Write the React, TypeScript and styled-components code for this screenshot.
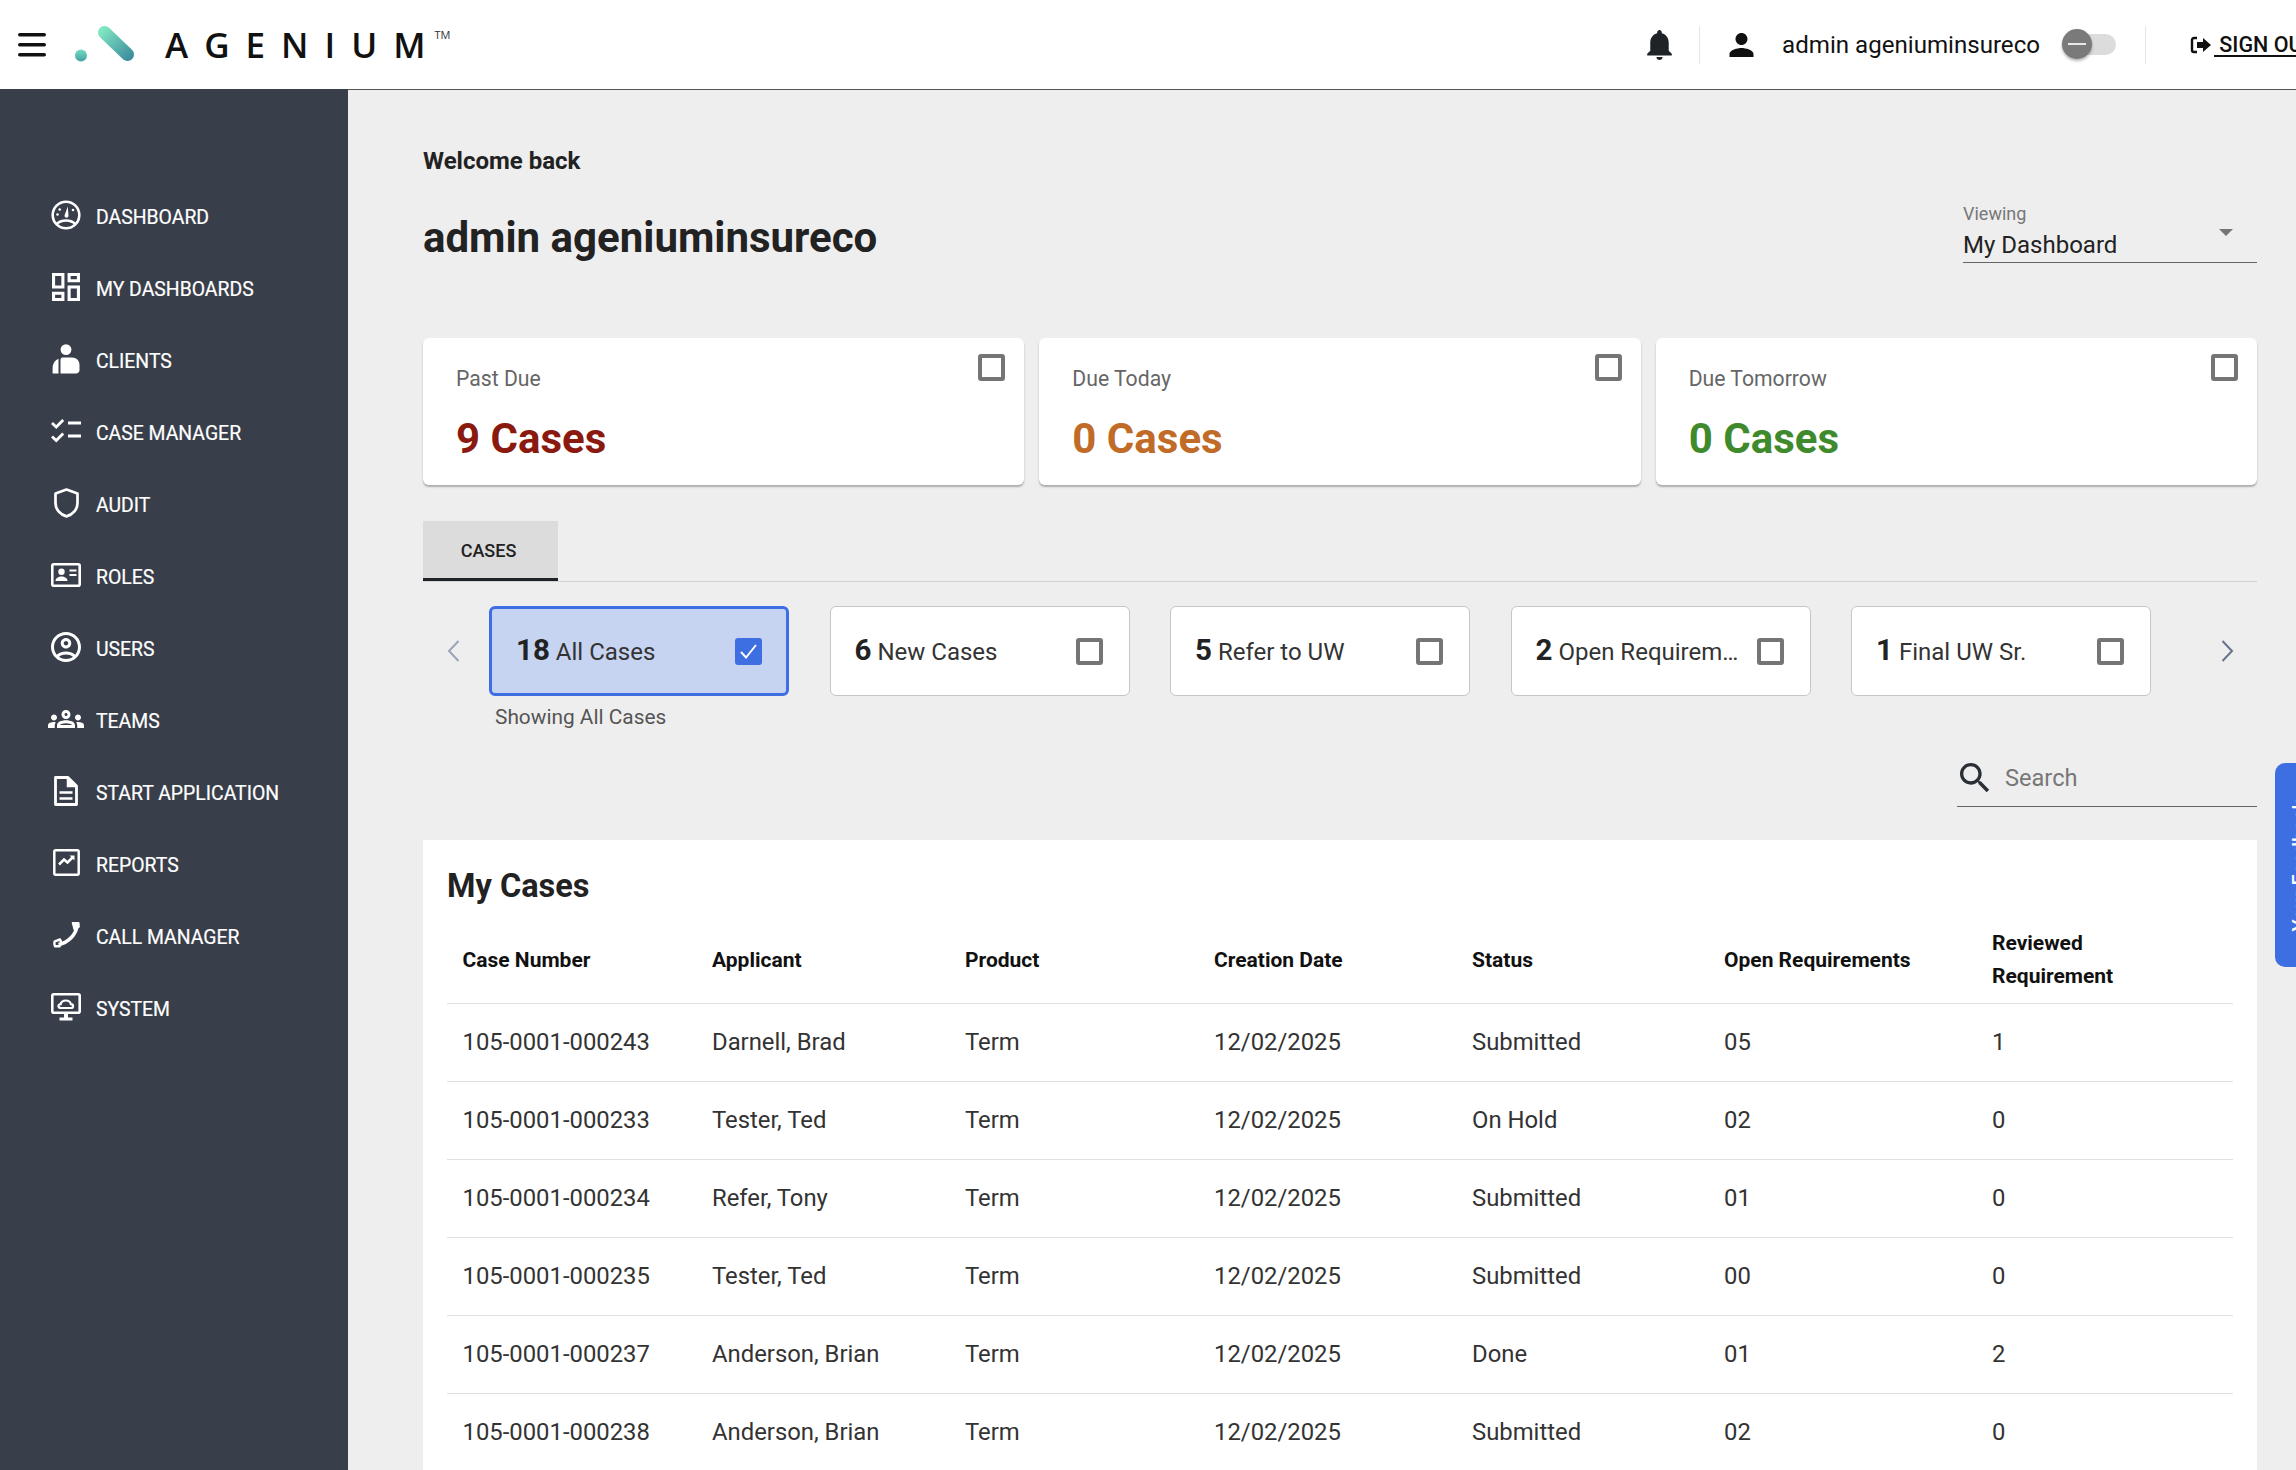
import React from "react";
import styled, { createGlobalStyle } from "styled-components";

const Global = createGlobalStyle`
  html, body { margin: 0; padding: 0; height: 100%; overflow: hidden; }
  body { font-family: Roboto, "Liberation Sans", sans-serif; background: #eeeeee; color: #222; }
  #root { height: 100%; }
  * { box-sizing: border-box; }
`;

const Page = styled.div`
  width: 2296px; height: 1470px; display: flex; flex-direction: column; overflow: hidden; position: relative;
`;
const Header = styled.header`
  height: 90px; flex: none; background: #fff; display: flex; align-items: center; padding-left: 18px;
  border-bottom: 1px solid #555;
`;
const LogoMark = styled.svg`margin-left: 29px; display: block; margin-top: -1px; flex: none;`;
const Brand = styled.div`
  margin-left: 30px; font-family: "Open Sans", sans-serif; font-size: 35px; font-weight: 600; letter-spacing: 16px;
  color: #111; line-height: 1; display: flex; align-items: flex-start; white-space: nowrap;
`;
const BrandLast = styled.span`letter-spacing: 0;`;
const Tm = styled.span`font-size: 11px; letter-spacing: 0; font-weight: 400; margin: 2px 0 0 9px; color: #333;`;
const Spacer = styled.div`flex: 1;`;
const BellIcon = styled.svg`flex: none; margin-right: -2px;`;
const HeadDivider = styled.div`width: 1px; height: 38px; background: #e6e6e6; margin: 0 29px; flex: none;`;
const UserName = styled.span`margin: 0 22px 0 28px; font-size: 24.1px; color: #111; white-space: nowrap;`;
const Toggle = styled.div`
  width: 54px; height: 21px; background: #dcdcdc; border-radius: 11px; position: relative; flex: none;
`;
const Thumb = styled.div`
  position: absolute; left: 0; top: -5px; width: 30px; height: 30px; border-radius: 50%; background: #7a7a7a;
  box-shadow: 0 2px 3px rgba(0,0,0,.3); display: flex; align-items: center; justify-content: center;
  &::after { content: ""; width: 18px; height: 2.5px; background: #e8e8e8; }
`;
const SignOut = styled.div`
  flex: 0 0 106px; margin-left: 15px; display: flex; align-items: center; overflow: hidden; white-space: nowrap;
  font-size: 21.5px; font-weight: 500; color: #111;
  svg { flex: none; }
`;
const SignText = styled.span`text-decoration: underline; text-underline-offset: 3px; white-space: pre; padding-left: 3px;`;

const Body = styled.div`flex: 1; display: flex; min-height: 0; margin-top: -1px;`;
const Sidebar = styled.nav`
  width: 348px; flex: none; background: #383e4a; padding-top: 92px; position: relative;
`;
const NavItem = styled.div`
  height: 72px; display: flex; align-items: center; color: #fff; font-size: 19.4px; font-weight: 400;
  -webkit-text-stroke: 0.2px #fff;
`;
const NavIcon = styled.div`
  width: 96px; flex: none; display: flex; justify-content: center; padding-left: 36px; margin-top: -5px;
  svg { display: block; }
`;
const Main = styled.main`flex: 1; min-width: 0; padding: 56px 39px 0 75px; overflow: hidden; margin-top: 1px;`;
const Welcome = styled.div`font-size: 24px; font-weight: 700; line-height: 30px; color: #222;`;
const TitleRow = styled.div`display: flex; justify-content: space-between; margin-top: 27px; height: 60px;`;
const Title = styled.h1`margin: 0; padding-top: 10px; font-size: 42px; font-weight: 700; line-height: 50px; color: #222;`;
const Dropdown = styled.div`width: 294px; border-bottom: 1px solid #666; position: relative;`;
const DropLabel = styled.div`font-size: 18px; line-height: 22px; color: #777;`;
const DropValue = styled.div`font-size: 24px; line-height: 37px; padding-top: 2px; color: #222;`;
const Caret = styled.div`
  position: absolute; right: 24px; top: 26px; width: 0; height: 0;
  border-left: 7px solid transparent; border-right: 7px solid transparent; border-top: 7px solid #757575;
`;
const Cards = styled.div`display: grid; grid-template-columns: repeat(3, 1fr); gap: 15px; margin-top: 75px;`;
const Card = styled.div`
  height: 147px; background: #fff; border-radius: 6px; position: relative; padding: 27px 33px;
  box-shadow: 0 2px 2px rgba(0,0,0,.28);
`;
const CardLabel = styled.div`font-size: 21.2px; line-height: 28px; color: #666;`;
const CardValue = styled.div<{ $color: string }>`
  font-size: 42px; font-weight: 700; line-height: 50px; margin-top: 21px; color: ${p => p.$color};
`;
const Box = styled.div<{ $checked?: boolean }>`
  width: 27px; height: 27px; border-radius: 3px; flex: none;
  border: 4px solid ${p => (p.$checked ? "#3d6fe3" : "#757575")};
  background: ${p => (p.$checked ? "#3d6fe3" : "transparent")};
  display: flex; align-items: center; justify-content: center;
`;
const CardCheck = styled.div`position: absolute; right: 19px; top: 16px;`;
const TabBar = styled.div`margin-top: 36px; border-bottom: 1px solid #d2d2d2; display: flex;`;
const Tab = styled.div`
  width: 135px; height: 60px; background: #dcdcdc; border-bottom: 3px solid #1f2328; display: flex; align-items: center;
  justify-content: center; font-size: 18px; font-weight: 500; color: #222; padding: 2px 4px 0 0;
`;
const Carousel = styled.div`display: flex; align-items: center; margin-top: 24px;`;
const LeftArrow = styled.div`width: 66px; flex: none; padding-left: 24px; svg { display: block; }`;
const RightArrow = styled.div`margin-left: 70px; flex: none; svg { display: block; }`;
const Track = styled.div`display: flex; gap: 40.5px;`;
const Filter = styled.div<{ $selected?: boolean }>`
  width: 300px; height: 90px; border-radius: 6px; display: flex; align-items: center; gap: 12px;
  background: ${p => (p.$selected ? "#c6d4f2" : "#fff")};
  border: ${p => (p.$selected ? "3px solid #3d6fe3" : "1px solid #c6c6c6")};
  padding: ${p => (p.$selected ? "0 24px 0 24px" : "0 26px 0 24px")};
`;
const FilterText = styled.div`
  flex: 1; min-width: 0; overflow: hidden; white-space: nowrap; text-overflow: ellipsis; font-size: 24px; color: #333;
  padding-bottom: 3px;
`;
const FilterCount = styled.b`font-size: 29.5px; font-weight: 700; color: #222; margin-right: 6px;`;
const Showing = styled.div`margin-top: 9px; padding-left: 72px; font-size: 20.85px; line-height: 24px; color: #555;`;
const SearchRow = styled.div`display: flex; justify-content: flex-end; margin-top: 22px;`;
const SearchBox = styled.div`
  width: 300px; height: 56px; border-bottom: 1px solid #666; display: flex; align-items: center; padding: 0 0 2px 3px; gap: 15px;
  font-size: 23.6px; color: #777;
`;
const TableCard = styled.section`margin-top: 33px; background: #fff; padding: 0 24px;`;
const TableTitle = styled.h2`margin: 0; padding: 26px 0 10px; font-size: 32.5px; font-weight: 700; line-height: 40px; color: #222;`;
const Table = styled.table`width: 100%; border-collapse: collapse; table-layout: fixed;`;
const Th = styled.th<{ $w: number }>`
  width: ${p => p.$w}px; height: 87px; padding: 2px 16px 0; text-align: left; font-size: 21px; font-weight: 700; line-height: 33px;
  color: #111; border-bottom: 1px solid #e0e0e0;
  &:first-child { padding-left: 15.5px; }
  &:last-child { padding-right: 60px; }
`;
const Td = styled.td`
  height: 78px; padding: 0 16px; font-size: 23.85px; color: #333; border-bottom: 1px solid #e0e0e0;
  &:first-child { padding-left: 15.5px; }
`;
const SideTab = styled.aside`
  position: absolute; left: 2275px; top: 763px; width: 50px; height: 204px; background: #3d6fe3; border-radius: 10px 0 0 10px;
  overflow: hidden; color: #fff; display: flex; align-items: center; justify-content: center;
`;
const SideLabel = styled.span`
  writing-mode: vertical-rl; transform: rotate(180deg); white-space: nowrap; font-size: 20px; font-weight: 500; line-height: 50px;
`;

const W = "#fff";
const icons: Record<string, React.ReactNode> = {
  dashboard: (
    <svg width="30" height="30" viewBox="0 0 30 30" fill="none" stroke={W}>
      <circle cx="15" cy="15" r="13.300" strokeWidth="2.600" />
      <path d="M5 24.600c2.800-2.900 6.200-4.100 10-4.100s7.200 1.200 10 4.100" strokeWidth="2.600" />
      <path d="M13.500 15.500 16.800 6.500l.7 9.500a2 2 0 1 1-4-.5z" fill={W} stroke="none" />
      <circle cx="8.700" cy="9.500" r="1.300" fill={W} stroke="none" />
      <circle cx="6.500" cy="14.500" r="1.300" fill={W} stroke="none" />
      <circle cx="22" cy="10" r="1.300" fill={W} stroke="none" />
    </svg>
  ),
  boards: (
    <svg width="28" height="28" viewBox="3 3 18 18" fill={W}>
      <path d="M19 5v2h-4V5h4M9 5v6H5V5h4m10 8v6h-4v-6h4M9 17v2H5v-2h4M21 3h-8v6h8V3zM11 3H3v10h8V3zm10 8h-8v10h8V11zm-10 4H3v6h8v-6z" />
    </svg>
  ),
  clients: (
    <svg width="28" height="30" viewBox="0 0 28 30" fill={W}>
      <circle cx="14" cy="5.600" r="5.400" />
      <path d="M10 13.500h10c4.400 0 7.500 3 7.500 7.500v5c0 2.200-1.600 3.600-3.500 3.600H8.500V16c0-1 .6-2 1.500-2.500z" />
      <path d="M6.500 14.800V29.600H.6V24c0-4 2.200-7.600 5.900-9.200z" />
    </svg>
  ),
  cases: (
    <svg width="30" height="26" viewBox="0 0 30 26" fill="none" stroke={W} strokeWidth="2.800">
      <path d="M1 5l4.200 4L12.200 2M1 18.500l4.200 4 7-7" />
      <path d="M17 5h13M17 18h13" />
    </svg>
  ),
  audit: (
    <svg width="25" height="30" viewBox="0 0 25 30" fill="none" stroke={W} strokeWidth="2.700">
      <path d="M12.500 1.600 1.500 5.500v9.500c0 6.400 4.500 11.600 11 13.400 6.500-1.800 11-7 11-13.400V5.500z" strokeLinejoin="round" />
    </svg>
  ),
  roles: (
    <svg width="30" height="24" viewBox="0 0 30 24" fill={W}>
      <rect x="1.300" y="1.300" width="27.400" height="21.400" rx="1.500" fill="none" stroke={W} strokeWidth="2.600" />
      <circle cx="10.500" cy="8.700" r="3.200" />
      <path d="M4.500 18c0-3 3-4.600 6-4.600s6 1.600 6 4.600z" />
      <rect x="18.500" y="6.500" width="7" height="2" />
      <rect x="18.500" y="11" width="7" height="2" />
    </svg>
  ),
  users: (
    <svg width="30" height="30" viewBox="2 2 20 20" fill={W}>
      <path d="M12 2C6.480 2 2 6.480 2 12s4.480 10 10 10 10-4.480 10-10S17.520 2 12 2zM7.350 18.500C8.660 17.560 10.260 17 12 17s3.340.56 4.650 1.500c-1.310.94-2.910 1.500-4.650 1.500s-3.340-.56-4.650-1.500zm10.790-1.380C16.450 15.800 14.320 15 12 15s-4.450.8-6.140 2.120C4.700 15.730 4 13.950 4 12c0-4.420 3.580-8 8-8s8 3.580 8 8c0 1.950-.7 3.730-1.860 5.120zM12 6c-1.930 0-3.500 1.570-3.500 3.500S10.070 13 12 13s3.500-1.570 3.500-3.500S13.930 6 12 6zm0 5c-.83 0-1.500-.67-1.500-1.500S11.170 8 12 8s1.500.67 1.500 1.500S12.830 11 12 11z" />
    </svg>
  ),
  teams: (
    <svg width="36" height="24" viewBox="0 4 24 16" fill={W}>
      <path d="M4 13c1.100 0 2-.9 2-2s-.9-2-2-2-2 .9-2 2 .9 2 2 2zm1.130 1.100c-.37-.06-.74-.1-1.130-.1-.99 0-1.930.21-2.780.58C.48 14.900 0 15.620 0 16.430V18h4.500v-1.610c0-.83.23-1.610.63-2.290zM20 13c1.100 0 2-.9 2-2s-.9-2-2-2-2 .9-2 2 .9 2 2 2zm4 3.430c0-.81-.48-1.530-1.220-1.850-.85-.37-1.790-.58-2.780-.58-.39 0-.76.04-1.130.1.4.68.63 1.460.63 2.290V18H24v-1.570zm-7.760-2.780c-1.170-.52-2.610-.9-4.240-.9-1.630 0-3.070.39-4.240.9C6.680 14.130 6 15.210 6 16.390V18h12v-1.610c0-1.180-.68-2.260-1.760-2.740zM8.070 16c.09-.23.13-.39.91-.69.97-.38 1.990-.56 3.020-.56s2.050.18 3.020.56c.77.3.81.46.91.69H8.070zM12 8c.55 0 1 .45 1 1s-.45 1-1 1-1-.45-1-1 .45-1 1-1m0-2c-1.660 0-3 1.340-3 3s1.340 3 3 3 3-1.340 3-3-1.340-3-3-3z" />
    </svg>
  ),
  doc: (
    <svg width="24" height="30" viewBox="0 0 24 30" fill="none" stroke={W} strokeWidth="2.800">
      <path d="M1.500 1.500h12.500l8.500 8.500v18.500h-21z" strokeLinejoin="round" />
      <path d="M13.500 1.500v9h9" fill={W} strokeWidth="1.500" />
      <path d="M5.500 16.500h13M5.500 22.500h13" strokeWidth="2.500" />
    </svg>
  ),
  reports: (
    <svg width="27" height="27" viewBox="0 0 27 27" fill="none" stroke={W}>
      <rect x="1.300" y="1.300" width="24.400" height="24.400" rx="1.500" strokeWidth="2.500" />
      <path d="M6 15.500l5-5 3.500 3L20 8" strokeWidth="2.500" />
      <path d="M16.500 6.500h5v5z" fill={W} stroke="none" />
    </svg>
  ),
  call: (
    <svg width="27" height="27" viewBox="0 0 27 27" fill="none" stroke={W} strokeLinejoin="round">
      <path d="M24 4.500C23.500 13 15.500 21.500 5.500 23.600" strokeWidth="3.600" />
      <path d="M19.500 1.800h6.200l.4 4-4.800 2.700z" fill={W} strokeWidth="1.600" />
      <path d="M1.800 20.300l5.200-1.800 1.500 3.200-2 3.600H2c-.7-1.800-.8-3.500-.2-5z" strokeWidth="2.400" />
    </svg>
  ),
  system: (
    <svg width="30" height="28" viewBox="0 0 30 28" fill="none" stroke={W}>
      <rect x="1.300" y="1.300" width="27.400" height="18.400" rx="1.500" strokeWidth="2.600" />
      <path d="M9.700 15c-3 0-3-3.800 0-3.800.5-2.600 2.900-3.700 5.200-3.700 2.500 0 4.500 1.400 5 3.700 2.900.1 2.900 3.800 0 3.800z" strokeWidth="2.200" />
      <rect x="8.500" y="24.500" width="13" height="3" fill={W} stroke="none" />
      <rect x="13" y="20" width="4" height="5" fill={W} stroke="none" />
    </svg>
  ),
};

const nav: [string, string][] = [
  ["dashboard", "DASHBOARD"], ["boards", "MY DASHBOARDS"], ["clients", "CLIENTS"], ["cases", "CASE MANAGER"],
  ["audit", "AUDIT"], ["roles", "ROLES"], ["users", "USERS"], ["teams", "TEAMS"], ["doc", "START APPLICATION"],
  ["reports", "REPORTS"], ["call", "CALL MANAGER"], ["system", "SYSTEM"],
];
const summary = [
  { label: "Past Due", value: "9 Cases", color: "#8a1a0f" },
  { label: "Due Today", value: "0 Cases", color: "#c06b28" },
  { label: "Due Tomorrow", value: "0 Cases", color: "#3f8a2c" },
];
const filters = [
  { n: 18, t: "All Cases", on: true }, { n: 6, t: "New Cases" }, { n: 5, t: "Refer to UW" },
  { n: 2, t: "Open Requirements" }, { n: 1, t: "Final UW Sr." },
];
const cols = [249, 253, 249, 258, 252, 268, 257];
const heads = ["Case Number", "Applicant", "Product", "Creation Date", "Status", "Open Requirements", "Reviewed Requirement"];
const rows = [
  ["105-0001-000243", "Darnell, Brad", "Term", "12/02/2025", "Submitted", "05", "1"],
  ["105-0001-000233", "Tester, Ted", "Term", "12/02/2025", "On Hold", "02", "0"],
  ["105-0001-000234", "Refer, Tony", "Term", "12/02/2025", "Submitted", "01", "0"],
  ["105-0001-000235", "Tester, Ted", "Term", "12/02/2025", "Submitted", "00", "0"],
  ["105-0001-000237", "Anderson, Brian", "Term", "12/02/2025", "Done", "01", "2"],
  ["105-0001-000238", "Anderson, Brian", "Term", "12/02/2025", "Submitted", "02", "0"],
];

const Tick = () => (
  <svg width="19" height="17" viewBox="0 0 19 17" fill="none" stroke="#fff" strokeWidth="2">
    <path d="M2 9l5 5.500L17 2" />
  </svg>
);

export default function App() {
  return (
    <Page>
      <Global />
      <Header>
        <svg width="28" height="24" viewBox="0 0 28 24" fill="#111">
          <rect y="0" width="28" height="3.600" rx="1.800" />
          <rect y="10" width="28" height="3.600" rx="1.800" />
          <rect y="20" width="28" height="3.600" rx="1.800" />
        </svg>
        <LogoMark width="60" height="36" viewBox="0 0 60 36">
          <defs>
            <linearGradient id="lg" gradientUnits="userSpaceOnUse" x1="27" y1="4" x2="56" y2="32">
              <stop offset="0" stopColor="#80e6c2" />
              <stop offset="1" stopColor="#3c8d9c" />
            </linearGradient>
            <linearGradient id="lg2" x1="0" y1="0" x2="0" y2="1">
              <stop offset="0" stopColor="#74dcbf" />
              <stop offset="1" stopColor="#45a0a6" />
            </linearGradient>
          </defs>
          <circle cx="6" cy="29.500" r="6" fill="url(#lg2)" />
          <line x1="29.500" y1="6.500" x2="52.500" y2="28.500" stroke="url(#lg)" strokeWidth="13" strokeLinecap="round" />
        </LogoMark>
        <Brand>AGENIU<BrandLast>M</BrandLast><Tm>TM</Tm></Brand>
        <Spacer />
        <BellIcon width="25" height="30" viewBox="4 2.500 16 19.500" fill="#1f2328">
          <path d="M12 22c1.100 0 2-.9 2-2h-4c0 1.100.9 2 2 2zm6-6v-5c0-3.070-1.630-5.640-4.500-6.320V4c0-.83-.67-1.500-1.500-1.500s-1.500.67-1.500 1.500v.68C7.640 5.360 6 7.920 6 11v5l-2 2v1h16v-1l-2-2z" />
        </BellIcon>
        <HeadDivider />
        <svg width="25" height="24" viewBox="4 4 16 16" fill="#111">
          <path d="M12 12c2.210 0 4-1.790 4-4s-1.790-4-4-4-4 1.790-4 4 1.790 4 4 4zm0 2c-2.670 0-8 1.340-8 4v2h16v-2c0-2.660-5.330-4-8-4z" />
        </svg>
        <UserName>admin ageniuminsureco</UserName>
        <Toggle><Thumb /></Toggle>
        <HeadDivider />
        <SignOut>
          <svg width="21" height="18" viewBox="0 0 21 18" fill="#111">
            <path d="M7 2H4a2 2 0 0 0-2 2v10a2 2 0 0 0 2 2h3" fill="none" stroke="#111" strokeWidth="2.400" />
            <path d="M13 2l8 7-8 7v-4H7V6h6z" />
          </svg>
          <SignText> SIGN OUT</SignText>
        </SignOut>
      </Header>
      <Body>
        <Sidebar>
          {nav.map(([k, t]) => (
            <NavItem key={t}>
              <NavIcon>{icons[k]}</NavIcon>
              {t}
            </NavItem>
          ))}
        </Sidebar>
        <Main>
          <Welcome>Welcome back</Welcome>
          <TitleRow>
            <Title>admin ageniuminsureco</Title>
            <Dropdown>
              <DropLabel>Viewing</DropLabel>
              <DropValue>My Dashboard</DropValue>
              <Caret />
            </Dropdown>
          </TitleRow>
          <Cards>
            {summary.map(s => (
              <Card key={s.label}>
                <CardLabel>{s.label}</CardLabel>
                <CardValue $color={s.color}>{s.value}</CardValue>
                <CardCheck><Box /></CardCheck>
              </Card>
            ))}
          </Cards>
          <TabBar><Tab>CASES</Tab></TabBar>
          <Carousel>
            <LeftArrow>
              <svg width="13" height="22" viewBox="0 0 13 22" fill="none" stroke="#9aa6b8" strokeWidth="2">
                <path d="M11.500 1 2 11l9.500 10" />
              </svg>
            </LeftArrow>
            <Track>
              {filters.map(f => (
                <Filter key={f.t} $selected={f.on}>
                  <FilterText><FilterCount>{f.n}</FilterCount>{f.t}</FilterText>
                  <Box $checked={f.on}>{f.on && <Tick />}</Box>
                </Filter>
              ))}
            </Track>
            <RightArrow>
              <svg width="13" height="22" viewBox="0 0 13 22" fill="none" stroke="#66758c" strokeWidth="2">
                <path d="M1.500 1 11 11 1.500 21" />
              </svg>
            </RightArrow>
          </Carousel>
          <Showing>Showing All Cases</Showing>
          <SearchRow>
            <SearchBox>
              <svg width="30" height="30" viewBox="3 3 18 18" fill="#2a2f36">
                <path d="M15.500 14h-.79l-.28-.27C15.410 12.590 16 11.110 16 9.500 16 5.910 13.090 3 9.500 3S3 5.910 3 9.500 5.910 16 9.500 16c1.610 0 3.090-.59 4.230-1.570l.27.28v.79l5 4.990L20.490 19l-4.990-5zm-6 0C7.010 14 5 11.990 5 9.500S7.010 5 9.500 5 14 7.010 14 9.500 11.990 14 9.500 14z" />
              </svg>
              Search
            </SearchBox>
          </SearchRow>
          <TableCard>
            <TableTitle>My Cases</TableTitle>
            <Table>
              <thead>
                <tr>{heads.map((h, i) => <Th key={h} $w={cols[i]}>{h}</Th>)}</tr>
              </thead>
              <tbody>
                {rows.map(r => (
                  <tr key={r[0]}>{r.map((c, i) => <Td key={i}>{c}</Td>)}</tr>
                ))}
              </tbody>
            </Table>
          </TableCard>
        </Main>
      </Body>
      <SideTab><SideLabel>Your Feedback</SideLabel></SideTab>
    </Page>
  );
}
